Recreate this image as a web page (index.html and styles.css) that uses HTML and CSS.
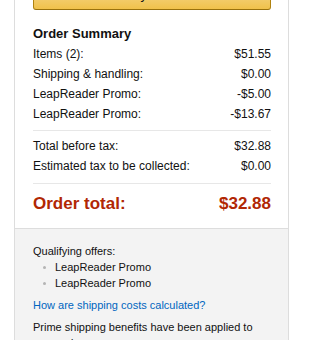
FILE: index.html
```html
<!DOCTYPE html>
<html>
<head>
<meta charset="utf-8">
<link rel="stylesheet" href="styles.css">
</head>
<body>
<div class="page">
  <div class="box">
    <div class="summary">
      <button class="place-btn">Place your order</button>
      <h3 class="title">Order Summary</h3>
      <div class="row"><span>Items (2):</span><span>$51.55</span></div>
      <div class="row"><span>Shipping &amp; handling:</span><span>$0.00</span></div>
      <div class="row"><span>LeapReader Promo:</span><span>-$5.00</span></div>
      <div class="row"><span>LeapReader Promo:</span><span>-$13.67</span></div>
      <hr class="sep sep-1">
      <div class="row"><span>Total before tax:</span><span>$32.88</span></div>
      <div class="row"><span>Estimated tax to be collected:</span><span>$0.00</span></div>
      <hr class="sep sep-2">
      <div class="row total"><span>Order total:</span><span>$32.88</span></div>
    </div>
    <div class="notes">
      <div class="line">Qualifying offers:</div>
      <ul class="offers">
        <li>LeapReader Promo</li>
        <li>LeapReader Promo</li>
      </ul>
      <a class="link" href="#">How are shipping costs calculated?</a>
      <p class="prime">Prime shipping benefits have been applied to your order.</p>
    </div>
  </div>
</div>
</body>
</html>
```
FILE: styles.css
```css
html, body {
  margin: 0;
  padding: 0;
  background: #fff;
}
body {
  font-family: "Liberation Sans", Arial, sans-serif;
  color: #111;
}
.page {
  padding-left: 14px;
}
.box {
  width: 275px;
  box-sizing: border-box;
  border: 1px solid #ddd;
  margin-top: -35px;
}
.summary {
  padding: 14px 17px 12px 18px;
}
.place-btn {
  display: block;
  width: 100%;
  height: 30px;
  box-sizing: border-box;
  margin: 0 0 14px 0;
  padding: 0;
  border: 1px solid #a88734;
  border-color: #c89411 #b0820f #99710d;
  border-radius: 3px;
  background: linear-gradient(to bottom, #f7dfa5, #f0c14b);
  font-family: "Liberation Sans", Arial, sans-serif;
  font-size: 13px;
  line-height: 28px;
  color: #111;
}
.title {
  margin: 0;
  font-size: 13px;
  line-height: 20px;
  font-weight: bold;
}
.row {
  display: flex;
  justify-content: space-between;
  font-size: 12px;
  line-height: 20px;
}
.sep {
  border: 0;
  height: 1px;
  background: #e7e7e7;
  margin: 0;
}
.sep-1 {
  margin: 6px 0 5px;
}
.sep-2 {
  margin: 7px 0 8px;
}
.row.total {
  font-size: 17px;
  line-height: 24px;
  font-weight: bold;
  color: #b12704;
}
.notes {
  background: #f3f3f3;
  border-top: 1px solid #ddd;
  padding: 14px 18px 20px;
  font-size: 11px;
  line-height: 16px;
}
.offers {
  list-style: none;
  margin: 0 0 6px;
  padding: 0;
}
.offers li {
  display: flex;
  align-items: center;
}
.offers li::before {
  content: "";
  width: 3px;
  height: 3px;
  border-radius: 50%;
  background: #b4b4b4;
  margin: 1px 9px 0 10px;
}
.link {
  display: block;
  color: #0066c0;
  text-decoration: none;
}
.prime {
  margin: 6px 0 0;
}
```
